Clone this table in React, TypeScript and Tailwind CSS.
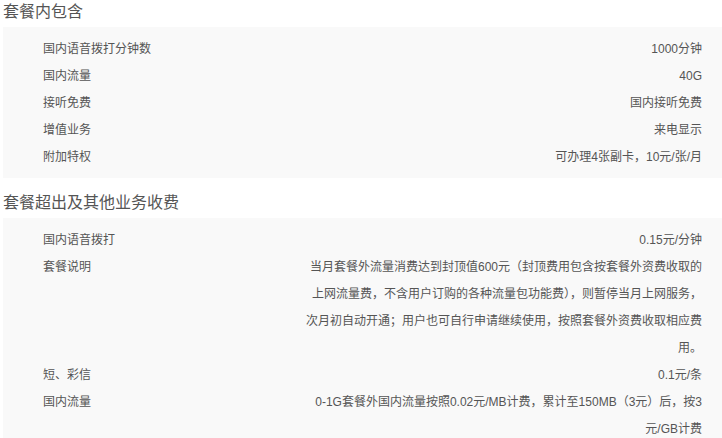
const included = [
  { label: '国内语音拨打分钟数', value: '1000分钟' },
  { label: '国内流量', value: '40G' },
  { label: '接听免费', value: '国内接听免费' },
  { label: '增值业务', value: '来电显示' },
  { label: '附加特权', value: '可办理4张副卡，10元/张/月' },
];

const extra = [
  { label: '国内语音拨打', value: '0.15元/分钟' },
  {
    label: '套餐说明',
    value:
      '当月套餐外流量消费达到封顶值600元（封顶费用包含按套餐外资费收取的上网流量费，不含用户订购的各种流量包功能费），则暂停当月上网服务，次月初自动开通；用户也可自行申请继续使用，按照套餐外资费收取相应费用。',
  },
  { label: '短、彩信', value: '0.1元/条' },
  { label: '国内流量', value: '0-1G套餐外国内流量按照0.02元/MB计费，累计至150MB（3元）后，按3元/GB计费' },
];

function Section({ title, rows }: { title: string; rows: { label: string; value: string }[] }) {
  return (
    <div>
      <h2 className="text-[16px] leading-[24px] text-[#555] mb-[3px]">{title}</h2>
      <div className="bg-[#f9f9f9] pl-[40px] pr-[20px] pt-[9px] pb-[7px]">
        {rows.map((r) => (
          <div key={r.label + r.value} className="flex justify-between text-[12px] leading-[27px] text-[#555]">
            <span className="shrink-0">{r.label}</span>
            <span className="max-w-[400px] text-right">{r.value}</span>
          </div>
        ))}
      </div>
    </div>
  );
}

export default function App() {
  return (
    <div
      className="min-h-screen bg-white pl-[3px]"
      style={{ fontFamily: '"Liberation Sans", Arial, "Noto Sans CJK SC", sans-serif' }}
    >
      <Section title="套餐内包含" rows={included} />
      <div className="mt-[13px]">
        <Section title="套餐超出及其他业务收费" rows={extra} />
      </div>
    </div>
  );
}
